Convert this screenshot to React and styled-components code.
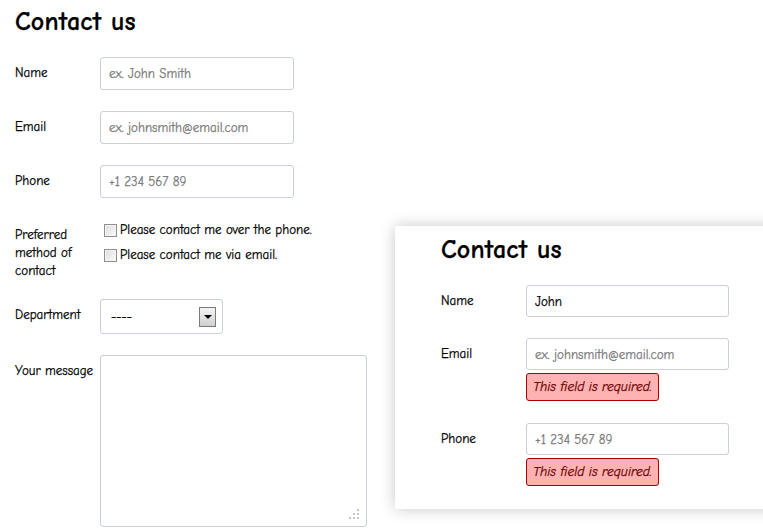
import React from 'react';
import styled, { createGlobalStyle } from 'styled-components';

const GlobalStyle = createGlobalStyle`
  html, body {
    margin: 0;
    padding: 0;
    background: #ffffff;
    overflow: hidden;
  }
  body {
    font-family: 'Comic Sans MS', 'Comic Neue', 'DejaVu Sans', sans-serif;
    color: #000000;
    -webkit-text-stroke: 0.25px currentColor;
  }
`;

const Page = styled.div`
  position: relative;
  width: 763px;
  height: 529px;
  padding: 0 15px;
  box-sizing: border-box;
  overflow: hidden;
`;

const Title = styled.h1`
  margin: ${({ $top }) => $top}px 0 20px 0;
  font-size: 26px;
  line-height: 30px;
  font-weight: bold;
  letter-spacing: 0.2px;
`;

const Row = styled.div`
  display: flex;
  align-items: flex-start;
  margin-bottom: ${({ $space }) => $space}px;
`;

const Label = styled.div`
  width: 85px;
  flex-shrink: 0;
  padding-top: 7px;
  padding-right: 5px;
  box-sizing: border-box;
  font-size: 13px;
  line-height: 18px;
`;

const Field = styled.div`
  display: flex;
  flex-direction: column;
  gap: 3px;
`;

const Input = styled.input`
  width: ${({ $w }) => $w}px;
  height: ${({ $h }) => $h}px;
  box-sizing: border-box;
  border: 1px solid #c9d0dc;
  border-radius: 3px;
  padding: 0 8px;
  font-family: inherit;
  font-size: 13px;
  color: #000;
  outline: none;
  -webkit-text-stroke: 0.25px currentColor;

  &::placeholder {
    color: #7a7a7a;
  }
`;

const Options = styled.div`
  padding-top: 2px;
  display: flex;
  flex-direction: column;
  gap: 7px;
  margin-left: 4px;
`;

const Option = styled.label`
  display: flex;
  align-items: center;
  gap: 3px;
  font-size: 13px;
  line-height: 18px;
`;

const Box = styled.span`
  width: 13px;
  height: 13px;
  box-sizing: border-box;
  border: 1px solid #8e8f8f;
  background: linear-gradient(135deg, #dcdcdc 0%, #f2f2f2 70%, #ffffff 100%);
  box-shadow: inset 0 0 0 1px #f4f4f4;
`;

const Select = styled.div`
  width: 123px;
  height: 35px;
  box-sizing: border-box;
  border: 1px solid #c9d0dc;
  border-radius: 3px;
  display: flex;
  align-items: center;
  justify-content: space-between;
  padding: 0 6px 0 10px;
  font-size: 13px;
`;

const Arrow = styled.span`
  width: 17px;
  height: 20px;
  box-sizing: border-box;
  border: 1px solid #7a7a7a;
  background: linear-gradient(#f4f4f4, #cfcfcf);
  display: flex;
  align-items: center;
  justify-content: center;

  &::after {
    content: '';
    border-left: 4px solid transparent;
    border-right: 4px solid transparent;
    border-top: 4px solid #000;
  }
`;

const AreaWrap = styled.div`
  position: relative;
  width: 267px;
  height: 172px;
`;

const TextArea = styled.textarea`
  width: 100%;
  height: 100%;
  box-sizing: border-box;
  border: 1px solid #c9d0dc;
  border-radius: 3px;
  resize: none;
  font-family: inherit;
  outline: none;
`;

const Grip = styled.svg`
  position: absolute;
  right: 7px;
  bottom: 7px;
`;

const Panel = styled.div`
  position: absolute;
  left: 395px;
  top: 226px;
  width: 400px;
  height: 283px;
  padding: 0 46px;
  box-sizing: border-box;
  background: #ffffff;
  box-shadow: 0 0 14px rgba(0, 0, 0, 0.22);
`;

const Error = styled.div`
  width: 133px;
  height: 28px;
  box-sizing: border-box;
  border: 1px solid #a80000;
  border-radius: 3px;
  background: #ffb2b2;
  color: #6a0000;
  font-style: italic;
  font-size: 13.5px;
  line-height: 26px;
  padding: 0 6px;
  white-space: nowrap;
  overflow: hidden;
`;

const App = () => (
  <>
    <GlobalStyle />
    <Page>
      <Title $top={7}>Contact us</Title>

      <Row $space={21}>
        <Label>Name</Label>
        <Input $w={194} $h={33} placeholder="ex. John Smith" />
      </Row>
      <Row $space={21}>
        <Label>Email</Label>
        <Input $w={194} $h={33} placeholder="ex. johnsmith@email.com" />
      </Row>
      <Row $space={21}>
        <Label>Phone</Label>
        <Input $w={194} $h={33} placeholder="+1 234 567 89" />
      </Row>
      <Row $space={19}>
        <Label>Preferred method of contact</Label>
        <Options>
          <Option>
            <Box />
            Please contact me over the phone.
          </Option>
          <Option>
            <Box />
            Please contact me via email.
          </Option>
        </Options>
      </Row>
      <Row $space={21}>
        <Label>Department</Label>
        <Select>
          <span>----</span>
          <Arrow />
        </Select>
      </Row>
      <Row $space={0}>
        <Label>Your message</Label>
        <AreaWrap>
          <TextArea />
          <Grip width="11" height="11" viewBox="0 0 11 11">
            <g fill="#c4c4c4">
              <rect x="8" y="0" width="2" height="2" />
              <rect x="4" y="4" width="2" height="2" />
              <rect x="8" y="4" width="2" height="2" />
              <rect x="0" y="8" width="2" height="2" />
              <rect x="4" y="8" width="2" height="2" />
              <rect x="8" y="8" width="2" height="2" />
            </g>
          </Grip>
        </AreaWrap>
      </Row>

      <Panel>
        <Title $top={9}>Contact us</Title>
        <Row $space={21}>
          <Label>Name</Label>
          <Input $w={203} $h={32} defaultValue="John" />
        </Row>
        <Row $space={22}>
          <Label>Email</Label>
          <Field>
            <Input $w={203} $h={32} placeholder="ex. johnsmith@email.com" />
            <Error>This field is required.</Error>
          </Field>
        </Row>
        <Row $space={0}>
          <Label>Phone</Label>
          <Field>
            <Input $w={203} $h={32} placeholder="+1 234 567 89" />
            <Error>This field is required.</Error>
          </Field>
        </Row>
      </Panel>
    </Page>
  </>
);

export default App;
